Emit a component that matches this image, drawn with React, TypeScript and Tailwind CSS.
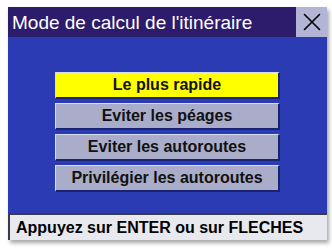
import { X } from 'lucide-react';

const options = [
  { label: 'Le plus rapide', selected: true },
  { label: 'Eviter les péages', selected: false },
  { label: 'Eviter les autoroutes', selected: false },
  { label: 'Privilégier les autoroutes', selected: false },
];

export default function App() {
  return (
    <div className="w-[332px] h-[248px] bg-white pl-[8px] pt-[7px]" style={{ fontFamily: '"Liberation Sans", Arial, sans-serif' }}>
      <div className="w-[319px] h-[233px] flex flex-col shadow-[2px_3px_4px_rgba(0,0,0,0.35)]">
        {/* Header */}
        <div className="h-[30px] bg-[#2d1b6b] flex items-center">
          <span className="flex-1 pl-[4px] text-white text-[19px] leading-none">Mode de calcul de l'itinéraire</span>
          <div className="w-[31px] h-[30px] bg-[#b4b4d6] flex items-center justify-center">
            <X className="w-[30px] h-[30px] text-black" strokeWidth={1.3} />
          </div>
        </div>

        {/* Body */}
        <div className="flex-1 bg-[#2a3bb3] flex flex-col items-center pt-[35px] gap-[4px]">
          {options.map((opt) => (
            <div
              key={opt.label}
              className={`w-[225px] h-[27px] flex items-center justify-center text-[16px] font-bold text-[#111] border-t border-l border-t-[#d8dcf0] border-l-[#d8dcf0] border-b-2 border-r-2 border-b-[#1a2370] border-r-[#1a2370] ${
                opt.selected ? 'bg-[#ffff00]' : 'bg-[#a9adc9]'
              }`}
            >
              {opt.label}
            </div>
          ))}
        </div>

        {/* Footer */}
        <div className="h-[27px] bg-[#e8e8ef] border-t-2 border-l-2 border-t-[#3a3a4a] border-l-[#3a3a4a] flex items-center pl-[6px]">
          <span className="text-[16px] font-bold text-black leading-none">Appuyez sur ENTER ou sur FLECHES</span>
        </div>
      </div>
    </div>
  );
}
